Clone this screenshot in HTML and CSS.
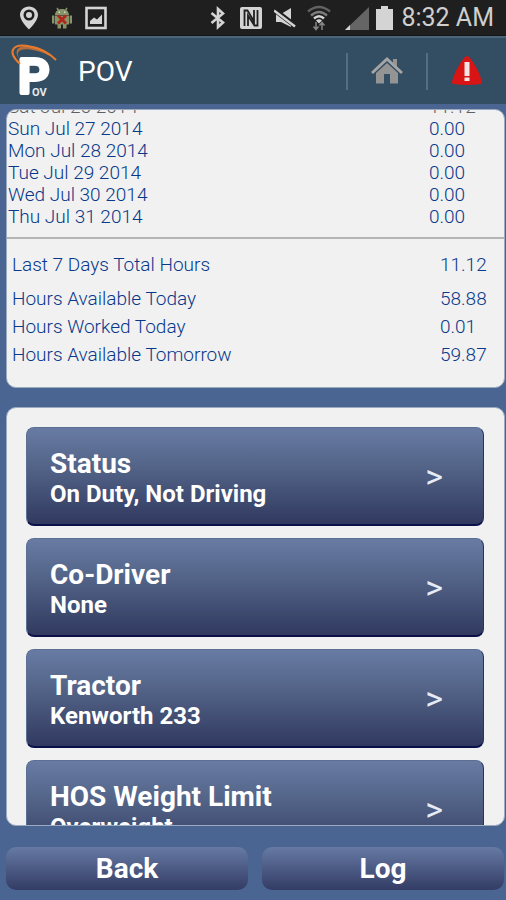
FILE: index.html
```
<!DOCTYPE html>
<html lang="en">
<head>
    <meta charset="UTF-8">
    <meta name="viewport" content="width=device-width, initial-scale=1.0">
    <title>POV</title>
    <link rel="stylesheet" href="styles.css">
</head>
<body>

    <div class="status-bar">
        <div class="notifications">
            <svg width="20" height="24" viewBox="0 0 20 24">
                <path fill="#d4d4d4" fill-rule="evenodd" d="M10 0.5C4.8 0.5 1 4.300 1 9c0 6 9 14.500 9 14.500S19 15 19 9c0-4.700-3.800-8.500-9-8.500zM10 3.500a5.500 5.500 0 1 1 0 11a5.500 5.500 0 1 1 0-11z"/>
                <circle cx="10" cy="9" r="3" fill="#d4d4d4"/>
            </svg>
            <svg width="20" height="24" viewBox="0 0 20 24">
                <path d="M5 2l2 3M15 2l-2 3" stroke="#87946a" stroke-width="1.500"/>
                <path fill="#87946a" d="M3 9C3 1 17 1 17 9zM3 9.500h14v9H3zM0 9.500h2.400v8H0zM17.600 9.500H20v8h-2.400zM5.500 18h3.500v4.500H5.500zM11 18h3.500v4.500H11z"/>
                <path fill="#d8dcc4" d="M6.500 5.500h1.500V7H6.500zM12 5.500h1.500V7H12z"/>
                <path d="M6 9.500l8 8M14 9.500l-8 8" stroke="#b3261c" stroke-width="2.800"/>
            </svg>
            <svg width="22" height="24" viewBox="0 0 22 24">
                <rect x="1.500" y="2" width="19" height="20" fill="none" stroke="#d4d4d4" stroke-width="2.600"/>
                <path fill="#d4d4d4" d="M5 18v-3l4-3.500 3 2 5-5V18z"/>
            </svg>
        </div>
        <div class="system">
            <svg class="bluetooth" width="16" height="24" viewBox="0 0 16 24">
                <path fill="none" stroke="#d4d4d4" stroke-width="2.600" d="M1.500 7L13 16.500 8 21V3l5 4.500L1.500 17"/>
            </svg>
            <svg class="nfc" width="22" height="24" viewBox="0 0 22 24">
                <rect x="0" y="1" width="22" height="22" rx="2" fill="#d4d4d4"/>
                <path fill="none" stroke="#202020" stroke-width="1.800" d="M4.500 20V4.500h3L14 15.500V4M8 20V9.500l6.500 10h3V4"/>
            </svg>
            <svg class="mute" width="22" height="24" viewBox="0 0 22 24">
                <path fill="#d4d4d4" d="M2 8h5l10-6v19L7 16H2z"/>
                <path d="M0 3.500l22 17" stroke="#202020" stroke-width="5"/>
                <path d="M0 4.500l21 16" stroke="#d4d4d4" stroke-width="2.400"/>
            </svg>
            <svg class="wifi" width="24" height="26" viewBox="0 0 24 26">
                <g fill="none" stroke-width="2.400">
                    <path stroke="#626262" d="M1 6.500Q12-2.500 23 6.500"/>
                    <path stroke="#7c7c7c" d="M4 10.500Q12 3.500 20 10.500"/>
                    <path stroke="#d4d4d4" d="M7 13.500Q12 9 17 13.500"/>
                </g>
                <path fill="#d4d4d4" d="M9 15.500q3-2.500 6 0l-3 3z"/>
                <path fill="none" stroke="#858585" stroke-width="1.500" d="M9 17v7M6.500 21.500L9 24.500l2.500-3M15 25v-7M12.500 20.500l2.500-3 2.500 3"/>
            </svg>
            <svg class="signal" width="24" height="24" viewBox="0 0 24 24">
                <path fill="#656565" d="M24 1v23H0z"/>
                <path fill="#d4d4d4" d="M5 19v5H0z"/>
            </svg>
            <svg class="battery" width="17" height="24" viewBox="0 0 17 24">
                <path fill="#d4d4d4" d="M5 0h7v3h5v21H0V3h5z"/>
            </svg>
            <span class="clock">8:32 AM</span>
        </div>
    </div>

    <header class="app-bar">
        <svg class="logo" width="48" height="54" viewBox="0 0 48 54">
            <text class="logo-letter" x="8" y="49">P</text>
            <text class="logo-small" x="22" y="52">OV</text>
            <path fill="none" stroke="#e87a2c" stroke-width="2" d="M10 20C-4 7 3-1 20 2.500c11 2 20 7 26 13.500"/>
            <path fill="#e87a2c" d="M12 18C4 9 8 4 20 5.500c10 1.500 19 5 26 10.500C39 7 26 0 14 2 5 3.500 4 10 12 18z" opacity="0.700"/>
        </svg>
        <h1>POV</h1>
        <nav class="actions">
            <button class="action" aria-label="Home">
                <svg width="32" height="30" viewBox="0 0 32 30">
                    <path fill="#949494" d="M16 7L27 17v10.500h-8V18h-6v9.500H5V17zM22 3h4v8l-4-4z"/>
                    <path fill="none" stroke="#a5a5a5" stroke-width="3" d="M1 17L16 3l15 14"/>
                </svg>
            </button>
            <button class="action" aria-label="Alerts">
                <svg width="32" height="32" viewBox="0 0 32 32">
                    <path fill="#d91414" d="M13.500 2.500q2.500-3 5 0 9 11 12.500 24 .5 2-2 2.500-13 2-26 0-2.500-.500-2-2.500Q4.500 13.500 13.500 2.500z"/>
                    <path fill="#f4e4e4" d="M13.500 7h5v14h-5zM13.500 22.500h5V26h-5z"/>
                </svg>
            </button>
        </nav>
    </header>

    <main class="content">
        <section class="panel hours">
            <table class="days">
                <tr class="past"><td>Sat Jul 26 2014</td><td>11.12</td></tr>
                <tr><td>Sun Jul 27 2014</td><td>0.00</td></tr>
                <tr><td>Mon Jul 28 2014</td><td>0.00</td></tr>
                <tr><td>Tue Jul 29 2014</td><td>0.00</td></tr>
                <tr><td>Wed Jul 30 2014</td><td>0.00</td></tr>
                <tr><td>Thu Jul 31 2014</td><td>0.00</td></tr>
            </table>
            <dl class="summary">
                <div class="total"><dt>Last 7 Days Total Hours</dt><dd>11.12</dd></div>
                <div><dt>Hours Available Today</dt><dd>58.88</dd></div>
                <div><dt>Hours Worked Today</dt><dd>0.01</dd></div>
                <div><dt>Hours Available Tomorrow</dt><dd>59.87</dd></div>
            </dl>
        </section>

        <section class="panel menu">
            <button class="card">
                <span class="label"><span class="title">Status</span><span class="value">On Duty, Not Driving</span></span>
                <span class="arrow">&gt;</span>
            </button>
            <button class="card">
                <span class="label"><span class="title">Co-Driver</span><span class="value">None</span></span>
                <span class="arrow">&gt;</span>
            </button>
            <button class="card">
                <span class="label"><span class="title">Tractor</span><span class="value">Kenworth 233</span></span>
                <span class="arrow">&gt;</span>
            </button>
            <button class="card">
                <span class="label"><span class="title">HOS Weight Limit</span><span class="value">Overweight</span></span>
                <span class="arrow">&gt;</span>
            </button>
        </section>
    </main>

    <footer class="bottom-bar">
        <button class="bar-button">Back</button>
        <button class="bar-button">Log</button>
    </footer>

</body>
</html>
```

FILE: styles.css
```
* {
    margin: 0;
    padding: 0;
    box-sizing: border-box;
}

body {
    font-family: Roboto, "Liberation Sans", sans-serif;
    display: flex;
    flex-direction: column;
    height: 100vh;
    overflow: hidden;
    background: #4a6591;
}

svg {
    display: block;
    flex: none;
}

button {
    font-family: inherit;
    border: none;
    color: #fff;
    cursor: pointer;
}

/* Phone status bar */
.status-bar {
    display: flex;
    justify-content: space-between;
    align-items: center;
    height: 36px;
    padding: 0 12px 0 19px;
    background: #1f1f1f;
    border-bottom: 1px solid #161616;
    flex: none;
}

.notifications {
    display: flex;
    gap: 13px;
}

.system {
    display: flex;
    align-items: center;
}

.bluetooth {
    margin-right: 14px;
}

.nfc {
    margin-right: 12px;
}

.mute {
    margin-right: 11px;
}

.wifi {
    margin-right: 14px;
}

.signal {
    margin-right: 7px;
}

.battery {
    margin-right: 8px;
}

.clock {
    font-size: 25px;
    line-height: 34px;
    color: #cfcfcf;
}

/* App bar */
.app-bar {
    display: flex;
    align-items: center;
    height: 68px;
    padding-left: 10px;
    background: #334d62;
    border-top: 2px solid #4b6679;
    flex: none;
}

.logo {
    overflow: visible;
}

.logo-letter {
    font: 500 49px Roboto, sans-serif;
    fill: #fff;
    stroke: #fff;
    stroke-width: 4px;
    stroke-linejoin: round;
}

.logo-small {
    font: bold 11px Roboto, sans-serif;
    fill: #e4e9ed;
    stroke: #334d62;
    stroke-width: 2px;
    paint-order: stroke;
}

h1 {
    margin-left: 20px;
    font-size: 28px;
    font-weight: 400;
    color: #fff;
}

.actions {
    display: flex;
    margin-left: auto;
}

.action {
    display: flex;
    justify-content: center;
    align-items: center;
    width: 80px;
    height: 37px;
    background: none;
    border-left: 2px solid #536d81;
}

/* Panels */
.content {
    flex: 1;
    min-height: 0;
    display: grid;
    grid-template-rows: minmax(0, 2fr) minmax(0, 3fr);
    gap: 19px;
    padding: 5px 1px 0 6px;
}

.panel {
    overflow: hidden;
    background: #f1f1f1;
    border: 1px solid #9aabc0;
    border-radius: 10px;
}

.hours {
    display: flex;
    flex-direction: column;
    justify-content: flex-end;
    font-size: 19px;
    font-weight: 300;
    color: #08388a;
}

.days {
    width: 100%;
    border-collapse: collapse;
    line-height: 22px;
}

.days td:first-child {
    padding-left: 1px;
}

.days td:last-child {
    width: 75px;
}

.past {
    color: #5c6068;
}

.summary {
    margin-top: 9px;
    padding: 12px 0 18px 5px;
    border-top: 2px solid #b4b4b4;
    line-height: 28px;
}

.summary div {
    display: flex;
    justify-content: space-between;
}

.summary dd {
    width: 64px;
}

.summary .total {
    margin-bottom: 6px;
}

.menu {
    display: flex;
    flex-direction: column;
    gap: 12px;
    padding: 19px 20px 0 19px;
}

.card {
    display: flex;
    justify-content: space-between;
    align-items: center;
    flex: none;
    padding: 20px 40px 15px 23px;
    text-align: left;
    background: linear-gradient(#687ba3, #536488 40%, #31395f);
    border: 1px solid #5b6e94;
    border-right-color: #27345e;
    border-bottom: 2px solid #0c1048;
    border-radius: 8px;
}

.label {
    display: flex;
    flex-direction: column;
    font-weight: 700;
}

.title {
    font-size: 28px;
    line-height: 31px;
}

.value {
    font-size: 24px;
    line-height: 30px;
}

.arrow {
    margin-bottom: 6px;
    font-size: 34px;
    line-height: 38px;
    color: #e6ebf5;
}

/* Bottom buttons */
.bottom-bar {
    display: flex;
    gap: 14px;
    padding: 21px 2px 10px 6px;
    flex: none;
}

.bar-button {
    flex: 1;
    height: 43px;
    font-size: 28px;
    font-weight: 700;
    background: linear-gradient(#667aa4, #333c64);
    border-radius: 10px;
}
```
